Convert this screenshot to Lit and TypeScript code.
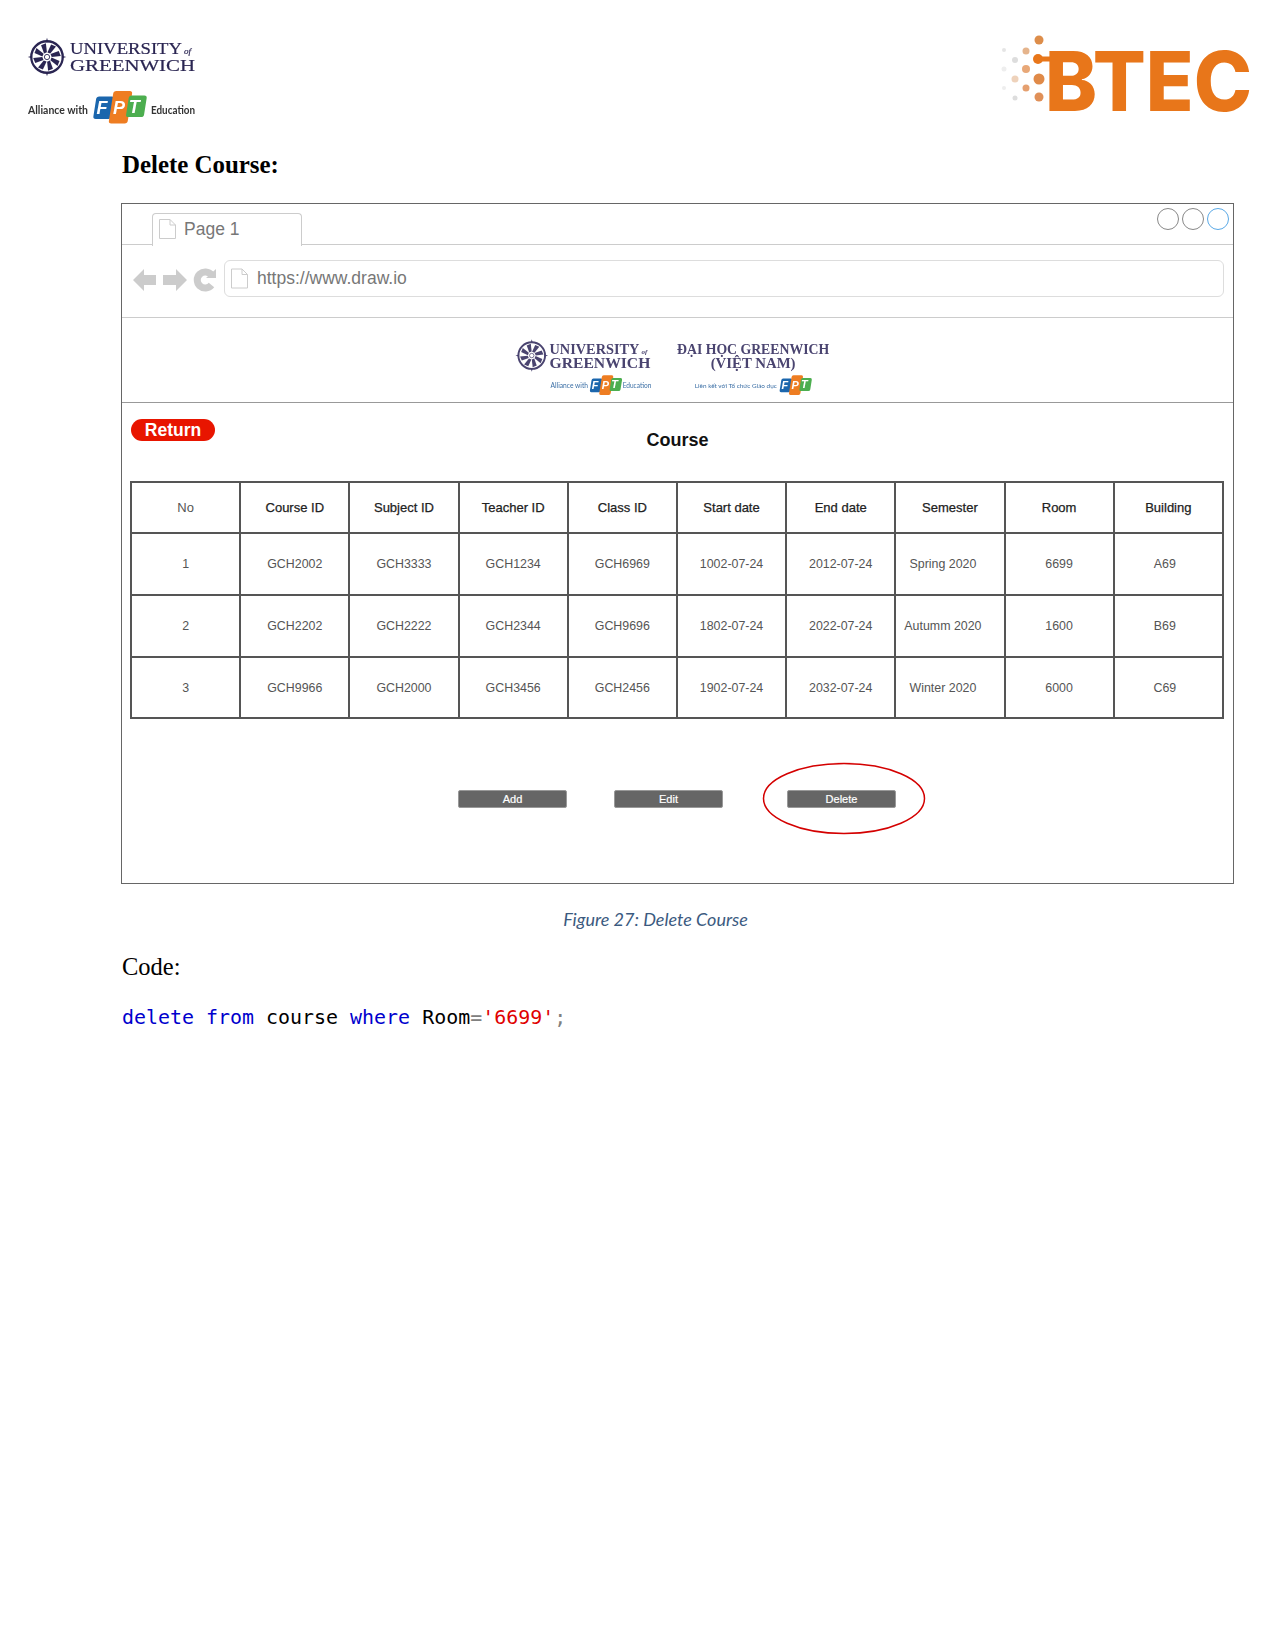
import { LitElement, css, html, svg } from "lit";
import { customElement } from "lit/decorators.js";

const COLUMNS = ["No", "Course ID", "Subject ID", "Teacher ID", "Class ID", "Start date", "End date", "Semester", "Room", "Building"];
const ROWS = [
  ["1", "GCH2002", "GCH3333", "GCH1234", "GCH6969", "1002-07-24", "2012-07-24", "Spring 2020", "6699", "A69"],
  ["2", "GCH2202", "GCH2222", "GCH2344", "GCH9696", "1802-07-24", "2022-07-24", "Autumm 2020", "1600", "B69"],
  ["3", "GCH9966", "GCH2000", "GCH3456", "GCH2456", "1902-07-24", "2032-07-24", "Winter 2020", "6000", "C69"],
];

const BTEC_DOTS = [
  [1039, 40, 4.5, "#dd8d4a"], [1026, 51, 3.5, "#e5b48c"], [1004, 50, 2, "#e5e5e5"],
  [1015, 60, 3, "#ddd"], [1038, 59, 5, "#e8761a"], [1026, 69, 4, "#e8a878"],
  [1004, 69, 2.5, "#eee"], [1039, 79, 5.5, "#e08a48"], [1015, 79, 3.5, "#eed2bb"],
  [1026, 88, 3.5, "#e5a070"], [1004, 88, 2, "#eee"], [1039, 97, 4.5, "#e09058"],
  [1015, 98, 2.5, "#ddd"],
];

// compass seal of the university, drawn around its centre
const seal = (cx: number, cy: number, r: number, color: string) => svg`
  <g transform="translate(${cx} ${cy}) scale(${r / 20})" fill=${color}>
    <circle r="18" fill="none" stroke=${color} stroke-width="2.6"></circle>
    ${[0, 45, 90, 135, 180, 225, 270, 315].map(
      (a) => svg`<path transform="rotate(${a + 22})" d="M-1.5 -5 L2 -5 L5 -15 L-1 -15 Z"></path>`,
    )}
    ${[0, 90, 180, 270].map((a) => svg`<path transform="rotate(${a})" d="M-1.5 -17 L0 -22 L1.5 -17 Z"></path>`)}
    <circle r="3" fill="none" stroke=${color} stroke-width="1"></circle>
  </g>
`;

const fptMark = (x: number, y: number, s: number) => svg`
  <g transform="translate(${x} ${y}) scale(${s})">
    <rect x="6" y="6" width="20" height="25" rx="3" fill="#1b66ad" transform="skewX(-9)"></rect>
    <rect x="24" y="0" width="21" height="36" rx="3" fill="#ee7d22" transform="skewX(-9)"></rect>
    <rect x="42" y="5" width="20" height="24" rx="3" fill="#4cae4f" transform="skewX(-9)"></rect>
    <g fill="#fff" font-family="Liberation Sans, sans-serif" font-weight="700" font-style="italic" font-size="20" text-anchor="middle">
      <text x="11" y="25">F</text>
      <text x="30" y="25">P</text>
      <text x="47" y="24">T</text>
    </g>
  </g>
`;

@customElement("app-root")
export class AppRoot extends LitElement {
  static styles = css`
    :host {
      display: block;
      min-height: 1651px;
      background: #fff;
      color: #000;
      font-family: "Liberation Serif", serif;
    }
    .header {
      display: flex;
      justify-content: space-between;
      align-items: flex-start;
      padding: 30px 0 0 20px;
      height: 120px;
    }
    .blur {
      filter: blur(0.4px);
    }
    .content {
      padding: 0 41px 0 122px;
    }
    h2 {
      margin: 0;
      font-size: 24.9px;
      line-height: 30px;
      height: 53px;
    }
    .frame {
      position: relative;
      margin-left: -1px;
      width: 1111px;
      border: 1px solid #666;
      font-family: "Liberation Sans", sans-serif;
    }
    .tabbar {
      display: flex;
      justify-content: space-between;
      height: 40px;
      border-bottom: 1px solid #ccc;
      box-sizing: content-box;
    }
    .tab {
      display: flex;
      align-items: center;
      gap: 8px;
      box-sizing: border-box;
      width: 150px;
      height: 33px;
      margin: 9px 0 -1px 30px;
      padding: 0 0 2px 6px;
      background: #fff;
      border: 1px solid #ccc;
      border-bottom: none;
      border-radius: 4px 4px 0 0;
      font-size: 17.5px;
      color: #777;
    }
    .dots {
      display: flex;
      gap: 3px;
      margin: 4px 4px 0 0;
    }
    .dot {
      width: 20px;
      height: 20px;
      border: 1.5px solid #888;
      border-radius: 50%;
    }
    .dot.active {
      border-color: #5aa9e6;
    }
    .navbar {
      display: flex;
      align-items: flex-start;
      height: 57px;
      padding: 15px 0 0 11px;
      border-bottom: 1px solid #ccc;
    }
    .nav-icons {
      display: block;
      margin: 7px 6px 0 0;
    }
    .address {
      display: flex;
      align-items: center;
      gap: 9px;
      box-sizing: border-box;
      width: 1000px;
      height: 37px;
      padding-left: 6px;
      border: 1px solid #ddd;
      border-radius: 6px;
      font-size: 17.5px;
      color: #777;
    }
    .band {
      display: block;
      height: 84px;
      border-bottom: 1px solid #999;
    }
    .main {
      padding: 16px 9px 75px;
    }
    .top {
      display: grid;
      grid-template-columns: 1fr auto 1fr;
      height: 62px;
    }
    .return {
      width: 84px;
      height: 22px;
      line-height: 22px;
      border-radius: 11px;
      background: #e81500;
      color: #fff;
      font-size: 17.5px;
      font-weight: 700;
      text-align: center;
    }
    .title {
      margin-top: 10px;
      font-size: 18px;
      font-weight: 700;
      line-height: 22px;
      color: #111;
    }
    table {
      width: 1094px;
      margin-left: -1px;
      table-layout: fixed;
      border-collapse: collapse;
    }
    th,
    td {
      padding: 0;
      border: 2px solid #555;
      text-align: center;
      font-size: 12.4px;
      color: #555;
      height: 60px;
    }
    tbody tr:last-child td {
      height: 59px;
    }
    th {
      height: 49px;
      font-size: 13px;
      font-weight: 400;
      color: #222;
      -webkit-text-stroke: 0.25px #222;
    }
    th:first-child {
      color: #555;
      -webkit-text-stroke: 0;
    }
    td.semester {
      padding-right: 14px;
    }
    td.building {
      padding-right: 7px;
    }
    .actions {
      display: flex;
      margin: 71px 0 0 327px;
    }
    .btn {
      position: relative;
      width: 109px;
      height: 18px;
      line-height: 16px;
      border: 1px solid #999;
      box-sizing: border-box;
      border-radius: 2px;
      background: #666;
      color: #fff;
      font-size: 11px;
      text-align: center;
      -webkit-text-stroke: 0.2px #fff;
    }
    .btn.edit {
      margin-left: 47px;
    }
    .btn.delete {
      margin-left: 64px;
    }
    .ring {
      position: absolute;
      left: -26px;
      top: -29px;
    }
    .caption {
      margin: 24px 0 0;
      width: 1067px;
      text-align: center;
      font-family: Lato, sans-serif;
      font-style: italic;
      font-size: 18px;
      line-height: 22px;
      color: #3b5a80;
    }
    .code-label {
      margin-top: 22px;
      font-size: 24.5px;
      line-height: 30px;
    }
    .code {
      margin-top: 23px;
      font-family: "DejaVu Sans Mono", monospace;
      font-size: 19.95px;
      line-height: 24px;
      white-space: pre;
    }
    .kw {
      color: #0000cd;
    }
    .str {
      color: #e00000;
    }
    .op {
      color: #808080;
    }
  `;

  private docIcon(width: number, height: number) {
    return html`<svg width=${width} height=${height} viewBox="0 0 17 20">
      <path d="M.5 .5 H11 L16.5 6 V19.5 H.5 Z M11 .5 V6 H16.5" fill="#fff" stroke="#ccc"></path>
    </svg>`;
  }

  private navIcons() {
    return html`<svg class="nav-icons" width="85" height="26" viewBox="0 0 85 26">
      <path d="M0 13 L11 2 V8 H23 V18 H11 V24 Z" fill="#ccc"></path>
      <path d="M54 13 L43 2 V8 H30 V18 H43 V24 Z" fill="#ccc"></path>
      <path d="M78.5 8 A8 8 0 1 0 78.5 18" fill="none" stroke="#ccc" stroke-width="7"></path>
      <path d="M73 11 L83 11 L83 2 Z" fill="#ccc"></path>
    </svg>`;
  }

  private headerLogo() {
    return html`<svg class="blur" width="185" height="100" viewBox="20 30 185 100">
      ${seal(47, 57, 17.5, "#2a2552")}
      <g fill="#2a2552" font-family="Liberation Serif, serif" font-size="17.5" stroke="#2a2552" stroke-width="0.2">
        <text x="70" y="54" textLength="112" lengthAdjust="spacingAndGlyphs">UNIVERSITY</text>
        <text x="184" y="54" font-size="9" font-style="italic">of</text>
        <text x="70" y="71" textLength="125" lengthAdjust="spacingAndGlyphs">GREENWICH</text>
      </g>
      <g fill="#333" font-family="Lato, sans-serif" font-size="11.5" font-weight="700">
        <text x="28" y="114" textLength="60" lengthAdjust="spacingAndGlyphs">Alliance with</text>
        <text x="151" y="114" textLength="44" lengthAdjust="spacingAndGlyphs">Education</text>
      </g>
      ${fptMark(92, 91, 0.9)}
    </svg>`;
  }

  private btecLogo() {
    return html`<svg class="blur" width="280" height="115" viewBox="995 30 280 115">
      ${BTEC_DOTS.map(([x, y, r, c]) => svg`<circle cx=${x} cy=${y} r=${r} fill=${c}></circle>`)}
      <rect x="1038" y="56.5" width="16" height="5" fill="#e8761a"></rect>
      <text x="1045" y="111" font-family="Inter, sans-serif" font-weight="800" font-size="82" fill="#e8761a" textLength="207" lengthAdjust="spacingAndGlyphs">BTEC</text>
    </svg>`;
  }

  private bandLogo() {
    return html`<svg class="band blur" width="1111" height="85" viewBox="122 317 1111 85">
      ${seal(530, 355, 15, "#4a4470")}
      <g fill="#4a4470" font-family="Liberation Serif, serif" font-size="15" font-weight="700">
        <text x="548" y="353" textLength="91" lengthAdjust="spacingAndGlyphs">UNIVERSITY</text>
        <text x="641" y="353" font-size="7" font-style="italic">of</text>
        <text x="548" y="368" textLength="102" lengthAdjust="spacingAndGlyphs">GREENWICH</text>
        <text x="677" y="353" textLength="154" lengthAdjust="spacingAndGlyphs">ĐẠI HỌC GREENWICH</text>
        <text x="754" y="368" text-anchor="middle">(VIỆT NAM)</text>
      </g>
      <g fill="#3a6ea5" font-family="Lato, sans-serif" font-size="7">
        <text x="549" y="388" textLength="38" lengthAdjust="spacingAndGlyphs">Alliance with</text>
        <text x="622" y="388" textLength="29" lengthAdjust="spacingAndGlyphs">Education</text>
        <text x="695" y="388" textLength="83" font-size="6.5" lengthAdjust="spacingAndGlyphs">Liên kết với Tổ chức Giáo dục</text>
      </g>
      ${fptMark(588, 375, 0.55)}
      ${fptMark(780, 375, 0.55)}
    </svg>`;
  }

  render() {
    return html`
      <div class="header">${this.headerLogo()} ${this.btecLogo()}</div>
      <div class="content">
        <h2>Delete Course:</h2>
        <div class="frame">
          <div class="tabbar">
            <div class="tab">${this.docIcon(17, 20)} Page 1</div>
            <div class="dots">
              <div class="dot"></div>
              <div class="dot"></div>
              <div class="dot active"></div>
            </div>
          </div>
          <div class="navbar">
            ${this.navIcons()}
            <div class="address">${this.docIcon(17, 21)} https://www.draw.io</div>
          </div>
          ${this.bandLogo()}
          <div class="main">
            <div class="top">
              <div class="return">Return</div>
              <div class="title">Course</div>
            </div>
            <table>
              <thead>
                <tr>${COLUMNS.map((c) => html`<th>${c}</th>`)}</tr>
              </thead>
              <tbody>
                ${ROWS.map(
                  (row) => html`<tr>
                    ${row.map((v, i) => html`<td class=${i === 7 ? "semester" : i === 9 ? "building" : ""}>${v}</td>`)}
                  </tr>`,
                )}
              </tbody>
            </table>
            <div class="actions">
              <div class="btn">Add</div>
              <div class="btn edit">Edit</div>
              <div class="btn delete">
                Delete
                <svg class="ring" width="164" height="73" viewBox="0 0 164 73">
                  <ellipse cx="82" cy="36.5" rx="80.5" ry="35" fill="none" stroke="#d40000" stroke-width="1.5"></ellipse>
                </svg>
              </div>
            </div>
          </div>
        </div>
        <p class="caption">Figure 27: Delete Course</p>
        <div class="code-label">Code:</div>
        <div class="code"><span class="kw">delete</span> <span class="kw">from</span> course <span class="kw">where</span> Room<span class="op">=</span><span class="str">'6699'</span><span class="op">;</span></div>
      </div>
    `;
  }
}

declare global {
  interface HTMLElementTagNameMap {
    "app-root": AppRoot;
  }
}
